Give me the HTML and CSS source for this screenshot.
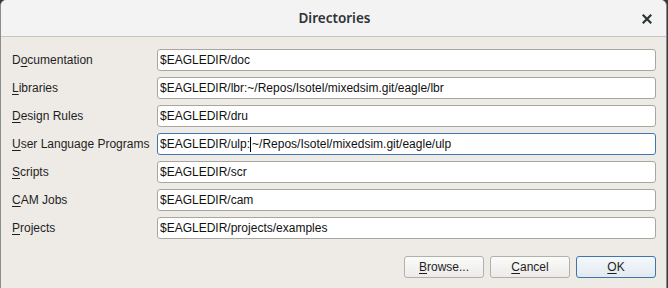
FILE: index.html
```html
<!DOCTYPE html>
<html>
<head>
<meta charset="utf-8">
<link rel="stylesheet" href="styles.css">
</head>
<body>
<div class="window">
  <div class="titlebar">
    <span class="title">Directories</span>
    <svg class="close" width="10" height="10" viewBox="0 0 10 10"><path d="M1.5 1.5L8.5 8.5M8.5 1.5L1.5 8.5" stroke="#2e3436" stroke-width="2.2" stroke-linecap="square"/></svg>
  </div>
  <div class="content">
    <div class="form">
      <label class="lbl">D<u>o</u>cumentation</label>
      <div class="field">$EAGLEDIR/doc</div>
      <label class="lbl"><u>L</u>ibraries</label>
      <div class="field">$EAGLEDIR/lbr:~/Repos/Isotel/mixedsim.git/eagle/lbr</div>
      <label class="lbl"><u>D</u>esign Rules</label>
      <div class="field">$EAGLEDIR/dru</div>
      <label class="lbl"><u>U</u>ser Language Programs</label>
      <div class="field focus">$EAGLEDIR/ulp:<span class="caret"></span>~/Repos/Isotel/mixedsim.git/eagle/ulp</div>
      <label class="lbl"><u>S</u>cripts</label>
      <div class="field">$EAGLEDIR/scr</div>
      <label class="lbl"><u>C</u>AM Jobs</label>
      <div class="field">$EAGLEDIR/cam</div>
      <label class="lbl"><u>P</u>rojects</label>
      <div class="field">$EAGLEDIR/projects/examples</div>
    </div>
    <div class="buttons">
      <button class="btn"><u>B</u>rowse...</button>
      <button class="btn"><u>C</u>ancel</button>
      <button class="btn default"><u>O</u>K</button>
    </div>
  </div>
</div>
</body>
</html>
```
FILE: styles.css
```css
html, body {
  margin: 0;
  padding: 0;
  background: #3a3a3a;
}
.window {
  width: 667px;
  height: 288px;
  box-sizing: border-box;
  border-left: 1px solid #8e8c89;
  border-right: 1px solid #8e8c89;
  border-radius: 6px 6px 0 0;
  background: #eeebe7;
  overflow: hidden;
  font-family: "Liberation Sans", Arial, sans-serif;
  font-size: 12px;
  color: #1e1e1e;
}
.titlebar {
  height: 37px;
  box-sizing: border-box;
  background: #f3f3f3;
  border-bottom: 1px solid #c8c5c1;
  display: flex;
  align-items: center;
  justify-content: center;
  position: relative;
}
.title {
  font-family: "Noto Sans", sans-serif;
  font-weight: 600;
  font-size: 13.5px;
  color: #2e3436;
  margin-left: 2px;
}
.close {
  position: absolute;
  right: 14px;
  top: 14px;
}
.content {
  padding: 12px 10px 0 11px;
}
.form {
  display: grid;
  grid-template-columns: 145px 1fr;
  row-gap: 6px;
}
.lbl {
  display: flex;
  align-items: center;
  height: 22px;
  white-space: nowrap;
}
.lbl u {
  text-decoration-thickness: 1px;
  text-underline-offset: 2px;
}
.field {
  height: 22px;
  box-sizing: border-box;
  border: 1px solid #a9a6a2;
  border-radius: 3px;
  background: #ffffff;
  padding: 0 0 0 2px;
  display: flex;
  align-items: center;
  white-space: nowrap;
  color: #111;
}
.field.focus {
  border-color: #3b78b3;
}
.caret {
  display: inline-block;
  width: 1px;
  height: 15px;
  background: #000;
  margin: 0 1px 0 0;
}
.buttons {
  display: flex;
  justify-content: flex-end;
  gap: 6px;
  margin-top: 17px;
}
.btn {
  width: 80px;
  height: 22px;
  box-sizing: border-box;
  border: 1px solid #b3b0ac;
  border-radius: 3px;
  background: linear-gradient(#fbfbfa, #ecebea);
  font-family: "Liberation Sans", Arial, sans-serif;
  font-size: 12px;
  color: #1e1e1e;
  padding: 0;
}
.btn u {
  text-underline-offset: 2px;
}
.btn.default {
  border-color: #3e76a8;
  background: linear-gradient(#f5f8fb, #e2e9f0);
}
```
